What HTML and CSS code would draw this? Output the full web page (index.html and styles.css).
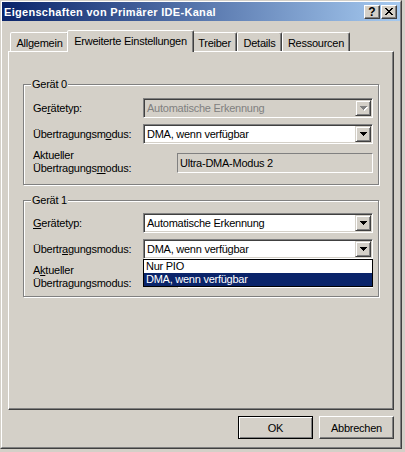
FILE: index.html
```html
<!DOCTYPE html>
<html lang="de">
<head>
<meta charset="utf-8">
<title>Eigenschaften von Primärer IDE-Kanal</title>
<link rel="stylesheet" href="styles.css">
</head>
<body>
<div class="window">
  <div class="frame">
    <div class="titlebar">
      <span class="title">Eigenschaften von Primärer IDE-Kanal</span>
      <div class="caption-buttons">
        <div class="cap-btn cap-help">?</div>
        <div class="cap-btn">
          <svg width="8" height="7" viewBox="0 0 8 7"><path d="M0 0h2v1H0zM6 0h2v1H6zM1 1h2v1H1zM5 1h2v1H5zM2 2h4v1H2zM3 3h2v1H3zM2 4h4v1H2zM1 5h2v1H1zM5 5h2v1H5zM0 6h2v1H0zM6 6h2v1H6z" fill="#000"/></svg>
        </div>
      </div>
    </div>
    <div class="client">
      <div class="tabs">
        <div class="tab tab-general">Allgemein</div>
        <div class="tab tab-advanced active">Erweiterte Einstellungen</div>
        <div class="tab tab-driver">Treiber</div>
        <div class="tab tab-details">Details</div>
        <div class="tab tab-resources">Ressourcen</div>
      </div>
      <div class="panel">
        <div class="group group-first">
          <div class="group-title">Gerät 0</div>
          <div class="rows">
            <div class="label">Ge<u>r</u>ätetyp:</div>
            <div class="combo disabled">
              <div class="combo-value">Automatische Erkennung</div>
              <div class="arrow-btn">
                <svg width="8" height="5" viewBox="0 0 8 5"><path d="M1 1h7v1H1zM2 2h5v1H2zM3 3h3v1H3zM4 4h1v1H4z" fill="#fff"/><path d="M0 0h7v1H0zM1 1h5v1H1zM2 2h3v1H2zM3 3h1v1H3z" fill="#808080"/></svg>
              </div>
            </div>
            <div class="label">Übertragungsm<u>o</u>dus:</div>
            <div class="combo">
              <div class="combo-value">DMA, wenn verfügbar</div>
              <div class="arrow-btn">
                <svg width="7" height="4" viewBox="0 0 7 4"><path d="M0 0h7v1H0zM1 1h5v1H1zM2 2h3v1H2zM3 3h1v1H3z" fill="#000"/></svg>
              </div>
            </div>
            <div class="label label-two">Aktueller<br>Übertragungs<u>m</u>odus:</div>
            <div class="static">Ultra-DMA-Modus 2</div>
          </div>
        </div>
        <div class="group group-second">
          <div class="group-title">Gerät 1</div>
          <div class="rows">
            <div class="label"><u>G</u>erätetyp:</div>
            <div class="combo">
              <div class="combo-value">Automatische Erkennung</div>
              <div class="arrow-btn">
                <svg width="7" height="4" viewBox="0 0 7 4"><path d="M0 0h7v1H0zM1 1h5v1H1zM2 2h3v1H2zM3 3h1v1H3z" fill="#000"/></svg>
              </div>
            </div>
            <div class="label">Übertr<u>a</u>gungsmodus:</div>
            <div class="combo open">
              <div class="combo-value">DMA, wenn verfügbar</div>
              <div class="arrow-btn">
                <svg width="7" height="4" viewBox="0 0 7 4"><path d="M0 0h7v1H0zM1 1h5v1H1zM2 2h3v1H2zM3 3h1v1H3z" fill="#000"/></svg>
              </div>
              <div class="dropdown">
                <div class="option">Nur PIO</div>
                <div class="option selected">DMA, wenn verfügbar</div>
              </div>
            </div>
            <div class="label label-two">A<u>k</u>tueller<br>Übertragungsmodus:</div>
            <div class="static"></div>
          </div>
        </div>
      </div>
      <div class="buttons">
        <div class="btn default">OK</div>
        <div class="btn">Abbrechen</div>
      </div>
    </div>
  </div>
</div>
</body>
</html>
```
FILE: styles.css
```css
* { box-sizing: border-box; }
html, body { margin: 0; padding: 0; }
body {
  width: 405px;
  height: 452px;
  overflow: hidden;
  background: #d4d0c8;
  font-family: "Liberation Sans", Arial, sans-serif;
  font-size: 11px;
  letter-spacing: -0.25px;
  color: #000;
}
u { text-decoration: underline; text-underline-offset: 1px; }

.window {
  width: 402px;
  height: 449px;
  border: 1px solid;
  border-color: #d4d0c8 #404040 #404040 #d4d0c8;
}
.frame {
  height: 100%;
  border: 1px solid;
  border-color: #fff #808080 #808080 #fff;
  display: flex;
  flex-direction: column;
}

.titlebar {
  height: 19px;
  flex: none;
  background: linear-gradient(to right, #0a246a, #a6caf0);
  display: flex;
  align-items: center;
  padding: 0 3px 0 2px;
}
.title {
  flex: 1;
  color: #fff;
  font-weight: bold;
  letter-spacing: 0.3px;
  white-space: nowrap;
}
.caption-buttons { display: flex; gap: 1px; }
.cap-btn {
  width: 16px;
  height: 14px;
  background: #d4d0c8;
  border: 1px solid;
  border-color: #fff #404040 #404040 #fff;
  box-shadow: inset -1px -1px #808080;
  display: flex;
  align-items: center;
  justify-content: center;
}
.cap-help { font-weight: bold; font-size: 12px; line-height: 12px; letter-spacing: 0; }

.client {
  flex: 1;
  display: flex;
  flex-direction: column;
  padding: 11px 6px 0 6px;
}

.tabs {
  height: 19px;
  display: flex;
  padding-left: 2px;
}
.tab {
  height: 19px;
  border: 1px solid;
  border-bottom: none;
  border-color: #fff #404040 transparent #fff;
  border-radius: 2px 2px 0 0;
  box-shadow: inset -1px 0 #808080;
  background: #d4d0c8;
  display: flex;
  align-items: center;
  justify-content: center;
  white-space: nowrap;
  padding-top: 1px;
}
.tab-general { width: 59px; }
.tab-advanced { width: 123px; }
.tab-driver { width: 45px; }
.tab-details { width: 45px; }
.tab-resources { width: 68px; }
.tab.active {
  width: 127px;
  height: 22px;
  margin: -2px -2px -1px;
  position: relative;
  z-index: 2;
  padding-top: 0;
  padding-bottom: 2px;
}

.panel {
  height: 359px;
  flex: none;
  border: 1px solid;
  border-color: #fff #404040 #404040 #fff;
  box-shadow: inset -1px -1px #808080;
  padding: 0 14px;
  display: flex;
  flex-direction: column;
}

.group {
  border: 1px solid #808080;
  box-shadow: inset 1px 1px #fff, 1px 1px #fff;
  padding: 0 5px 9px 9px;
  display: flex;
  flex-direction: column;
  align-items: flex-start;
}
.group-first { margin-top: 32px; }
.group-second { margin-top: 15px; padding-bottom: 6px; }
.group-title {
  margin: -7px 0 0 -2px;
  padding: 0 1px;
  line-height: 13px;
  background: #d4d0c8;
}
.rows {
  margin-top: 7px;
  display: grid;
  grid-template-columns: 110px 230px;
  row-gap: 6px;
  align-items: center;
}
.group-second .rows { margin-top: 6px; }
.label { line-height: 13px; white-space: nowrap; }
.label-two { align-self: start; margin-top: -1px; }

.combo {
  height: 20px;
  display: flex;
  padding: 1px;
  border: 1px solid;
  border-color: #808080 #fff #fff #808080;
  box-shadow: inset 1px 1px #404040, inset -1px -1px #d4d0c8;
  background: #fff;
  position: relative;
}
.combo-value {
  flex: 1;
  line-height: 16px;
  padding-left: 2px;
  white-space: nowrap;
  overflow: hidden;
}
.combo.disabled { background: #d4d0c8; }
.combo.disabled .combo-value { color: #808080; }
.arrow-btn {
  width: 16px;
  height: 16px;
  flex: none;
  border: 1px solid;
  border-color: #d4d0c8 #404040 #404040 #d4d0c8;
  box-shadow: inset 1px 1px #fff, inset -1px -1px #808080;
  background: #d4d0c8;
  display: flex;
  align-items: center;
  justify-content: center;
  padding-left: 1px;
}
.arrow-btn svg { display: block; }

.dropdown {
  position: absolute;
  left: -1px;
  right: -1px;
  top: 19px;
  border: 1px solid #000;
  background: #fff;
  z-index: 5;
}
.option { height: 13px; line-height: 13px; padding-left: 2px; white-space: nowrap; }
.option.selected { background: #0a246a; color: #fff; }

.static {
  margin-left: 34px;
  height: 20px;
  border: 1px solid;
  border-color: #808080 #fff #fff #808080;
  line-height: 18px;
  padding-left: 2px;
  white-space: nowrap;
}

.buttons {
  margin-top: 6px;
  display: flex;
  justify-content: flex-end;
  gap: 6px;
}
.btn {
  width: 75px;
  height: 23px;
  border: 1px solid;
  border-color: #fff #404040 #404040 #fff;
  box-shadow: inset -1px -1px #808080;
  display: flex;
  align-items: center;
  justify-content: center;
}
.btn.default {
  border-color: #000;
  box-shadow: inset 1px 1px #fff, inset -1px -1px #808080;
}
```
